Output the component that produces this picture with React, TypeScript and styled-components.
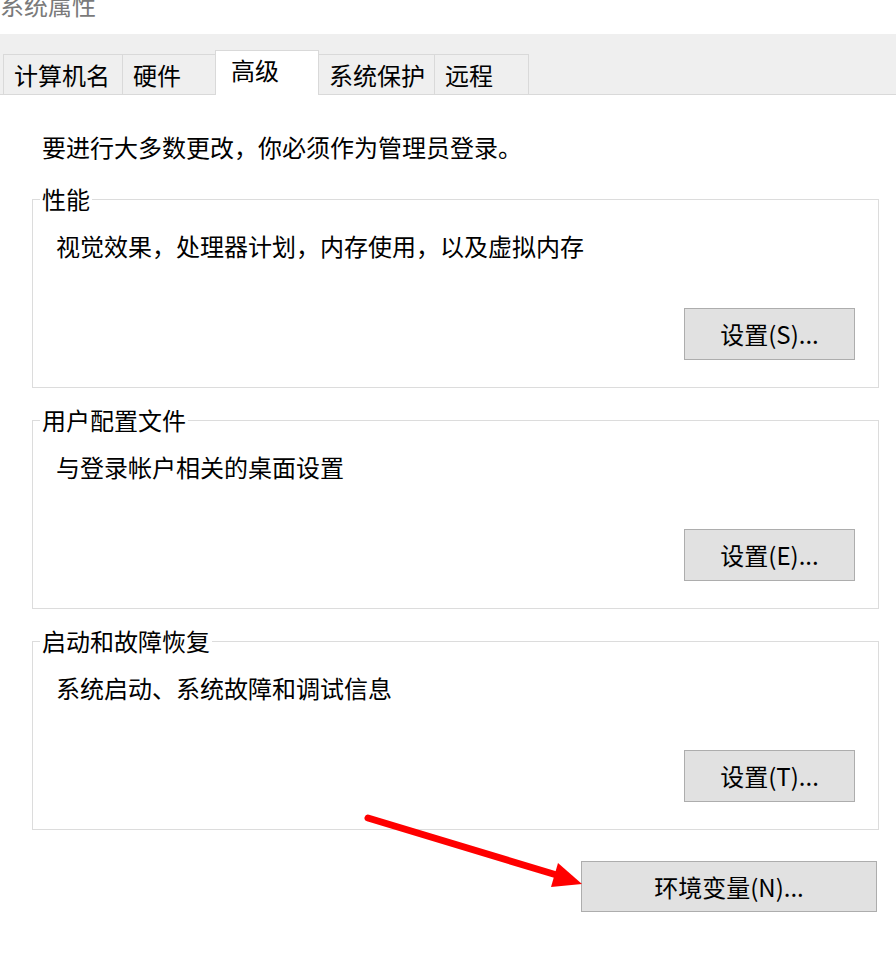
import React from "react";
import styled, { createGlobalStyle } from "styled-components";

const GlobalStyle = createGlobalStyle`
  html, body {
    margin: 0;
    padding: 0;
    background: #ffffff;
  }
  body {
    font-family: "Noto Sans CJK SC", "Noto Sans", sans-serif;
    color: #000000;
  }
  * { box-sizing: border-box; }
`;

const Window = styled.div`
  position: relative;
  width: 896px;
  height: 978px;
  overflow: hidden;
  background: #ffffff;
`;

const TitleBar = styled.div`
  height: 34px;
  overflow: hidden;
`;

const Title = styled.div`
  margin-top: -7px;
  font-size: 24px;
  line-height: 24px;
  color: #7a7a7a;
`;

const TabStrip = styled.div`
  height: 61px;
  background: #efefef;
  border-bottom: 1px solid #d9d9d9;
  display: flex;
  align-items: flex-end;
  padding-left: 3px;
`;

const Tab = styled.div<{ $w: number; $active?: boolean }>`
  position: relative;
  width: ${(p) => p.$w}px;
  height: ${(p) => (p.$active ? 45 : 40)}px;
  margin-bottom: ${(p) => (p.$active ? -1 : 0)}px;
  margin-left: -1px;
  &:first-child { margin-left: 0; }
  z-index: ${(p) => (p.$active ? 1 : 0)};
  background: ${(p) => (p.$active ? "#ffffff" : "#efefef")};
  border: 1px solid #d9d9d9;
  border-bottom: none;
  display: flex;
  align-items: center;
  padding-left: ${(p) => (p.$active ? 15 : 10)}px;
  padding-bottom: ${(p) => (p.$active ? 6 : 0)}px;
  font-size: 24px;
  line-height: 24px;
  white-space: nowrap;
`;

const Content = styled.div`
  padding: 0 17px 0 32px;
  display: flex;
  flex-direction: column;
`;

const Notice = styled.p`
  margin: 40px 0 0 10px;
  font-size: 24px;
  line-height: 24px;
`;

const Groups = styled.div`
  margin-top: 28px;
  display: flex;
  flex-direction: column;
  gap: 20px;
`;

const Group = styled.fieldset`
  margin: 0;
  padding: 0 23px 27px 23px;
  border: 1px solid #dcdcdc;
  min-width: 0;
  display: flex;
  flex-direction: column;
`;

const Legend = styled.legend`
  margin-left: -16px;
  padding: 0 2px;
  font-size: 24px;
  line-height: 24px;
`;

const Description = styled.div`
  margin-top: 23px;
  font-size: 24px;
  line-height: 24px;
`;

const ButtonRow = styled.div`
  display: flex;
  justify-content: flex-end;
  margin-top: 50px;
`;

const Button = styled.button<{ $w: number; $h: number }>`
  width: ${(p) => p.$w}px;
  height: ${(p) => p.$h}px;
  background: #e1e1e1;
  border: 1px solid #adadad;
  border-radius: 0;
  padding: 0;
  font-family: "Noto Sans CJK SC", "Noto Sans", sans-serif;
  font-size: 24px;
  line-height: 24px;
  color: #000000;
  display: flex;
  align-items: center;
  justify-content: center;
`;

const FooterRow = styled.div`
  display: flex;
  justify-content: flex-end;
  margin-top: 31px;
  padding-right: 2px;
`;

const ArrowLayer = styled.svg`
  position: absolute;
  left: 0;
  top: 0;
  pointer-events: none;
`;

const tabs = [
  { label: "计算机名", w: 120 },
  { label: "硬件", w: 94 },
  { label: "高级", w: 104, active: true },
  { label: "系统保护", w: 117 },
  { label: "远程", w: 95 },
];

const groups = [
  { title: "性能", desc: "视觉效果，处理器计划，内存使用，以及虚拟内存", btn: "设置(S)..." },
  { title: "用户配置文件", desc: "与登录帐户相关的桌面设置", btn: "设置(E)..." },
  { title: "启动和故障恢复", desc: "系统启动、系统故障和调试信息", btn: "设置(T)..." },
];

export default function App() {
  return (
    <Window>
      <GlobalStyle />
      <TitleBar>
        <Title>系统属性</Title>
      </TitleBar>
      <TabStrip>
        {tabs.map((t) => (
          <Tab key={t.label} $w={t.w} $active={t.active}>
            {t.label}
          </Tab>
        ))}
      </TabStrip>
      <Content>
        <Notice>要进行大多数更改，你必须作为管理员登录。</Notice>
        <Groups>
          {groups.map((g) => (
            <Group key={g.title}>
              <Legend>{g.title}</Legend>
              <Description>{g.desc}</Description>
              <ButtonRow>
                <Button $w={171} $h={52}>{g.btn}</Button>
              </ButtonRow>
            </Group>
          ))}
        </Groups>
        <FooterRow>
          <Button $w={296} $h={51}>环境变量(N)...</Button>
        </FooterRow>
      </Content>
      <ArrowLayer width="896" height="978" viewBox="0 0 896 978">
        <line x1="368" y1="818" x2="560" y2="876" stroke="#ff0000" strokeWidth="7" strokeLinecap="round" />
        <polygon points="582,884 558,863 551,887" fill="#ff0000" />
      </ArrowLayer>
    </Window>
  );
}
